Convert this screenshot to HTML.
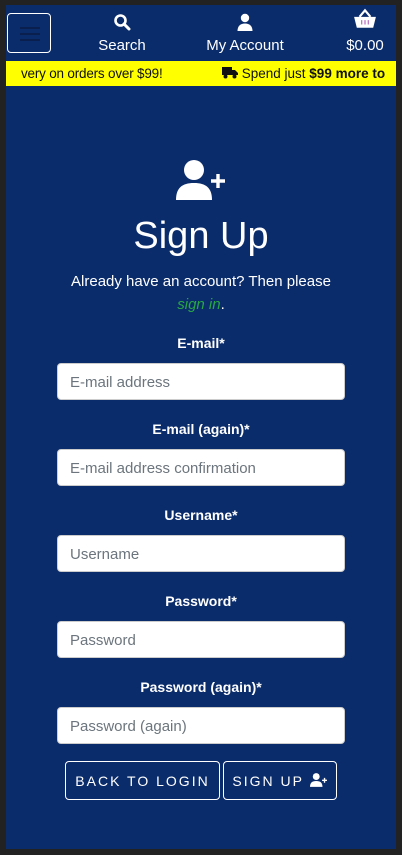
<!DOCTYPE html>
<html><head><meta charset="utf-8"><style>
*{box-sizing:border-box;margin:0;padding:0}
html,body{width:402px;height:855px;background:#222;overflow:hidden;font-family:"Liberation Sans",sans-serif}
.page{position:absolute;left:6px;top:5px;width:390px;height:844px;background:#0b2c6b;color:#fff}
.menu{position:absolute;left:1px;top:8px;width:44px;height:40px;border:1px solid #fff;border-radius:4px}
.menu i{position:absolute;left:12px;width:20px;height:2px;background:#0a1f4d}
.nav{position:absolute;top:0;text-align:center;font-size:15px}
.bar{position:absolute;left:0;top:56px;width:390px;height:25px;background:#ff0;color:#111;font-size:13.5px;line-height:25px;white-space:nowrap;overflow:hidden}
.lbl{position:absolute;left:0;width:390px;text-align:center;font-size:14px;font-weight:bold}
.inp{position:absolute;left:51px;width:288px;height:37px;background:#fff;border:1px solid #ccc;border-radius:4px;color:#6c757d;font-size:15px;line-height:38px;padding-left:12px}
.btn{position:absolute;top:756px;height:39px;border:1px solid #fff;border-radius:4px;font-size:14px;letter-spacing:2px;line-height:39px;text-align:center;white-space:nowrap}
</style></head><body><div class="page">
<div class="menu"><i style="top:13px"></i><i style="top:19px"></i><i style="top:25px"></i></div>
<div class="nav" style="left:88px;width:56px;top:8px">
<svg width="18" height="18" viewBox="0 0 18 18"><circle cx="7.5" cy="7.5" r="5" fill="none" stroke="#fff" stroke-width="2.6"/><path d="M11 11l5 5" stroke="#fff" stroke-width="3" stroke-linecap="round"/></svg>
<div style="margin-top:2px">Search</div></div>
<div class="nav" style="left:194px;width:90px;top:8px">
<svg width="18" height="18" viewBox="0 0 18 18"><circle cx="9" cy="5" r="4.2" fill="#fff"/><path d="M1.5 18c0-5 3-7.5 7.5-7.5s7.5 2.5 7.5 7.5z" fill="#fff"/></svg>
<div style="margin-top:2px">My Account</div></div>
<div class="nav" style="left:336px;width:46px;top:3px">
<svg width="24" height="22" viewBox="0 0 22 20"><path d="M6 8l5-6 5 6" fill="none" stroke="#fff" stroke-width="2"/><path d="M1 8h20l-2.5 10h-15z" fill="#fff"/><path d="M8 11v4M11 11v4M14 11v4" stroke="#b55ab5" stroke-width="1"/></svg>
<div style="margin-top:3px">$0.00</div></div>
<div class="bar"><span style="position:absolute;left:15px;letter-spacing:-0.2px">very on orders over $99!</span>
<span style="position:absolute;left:216px"><svg width="16" height="13" viewBox="0 0 16 13" style="vertical-align:-1px"><path d="M0 1h10v8H0zM10 4h3l3 3v2h-6z" fill="#111"/><circle cx="3.5" cy="10.5" r="2" fill="#111"/><circle cx="12.5" cy="10.5" r="2" fill="#111"/></svg> Spend just <b>$99 more to</b></span></div>
<svg style="position:absolute;left:170px;top:155px" width="52" height="40" viewBox="0 0 52 40"><circle cx="18" cy="10" r="10" fill="#fff"/><path d="M0 40c0-12 6-17 18-17s18 5 18 17z" fill="#fff"/><path d="M42 14v14M35 21h14" stroke="#fff" stroke-width="3.4"/></svg>
<div style="position:absolute;left:0;width:390px;top:210px;text-align:center;font-size:38px">Sign Up</div>
<div style="position:absolute;left:0;width:390px;top:265px;text-align:center;font-size:15px;line-height:23px">Already have an account? Then please<br><i style="color:#28a745">sign in</i>.</div>
<div class="lbl" style="top:330px">E-mail*</div><div class="inp" style="top:358px">E-mail address</div>
<div class="lbl" style="top:416px">E-mail (again)*</div><div class="inp" style="top:444px">E-mail address confirmation</div>
<div class="lbl" style="top:502px">Username*</div><div class="inp" style="top:530px">Username</div>
<div class="lbl" style="top:588px">Password*</div><div class="inp" style="top:616px">Password</div>
<div class="lbl" style="top:674px">Password (again)*</div><div class="inp" style="top:702px">Password (again)</div>
<div class="btn" style="left:59px;width:155px">BACK TO LOGIN</div>
<div class="btn" style="left:217px;width:114px">SIGN UP <svg width="18" height="14" viewBox="0 0 52 40" style="vertical-align:-1px"><circle cx="18" cy="10" r="10" fill="#fff"/><path d="M0 40c0-12 6-17 18-17s18 5 18 17z" fill="#fff"/><path d="M42 14v14M35 21h14" stroke="#fff" stroke-width="4"/></svg></div>
</div></body></html>
